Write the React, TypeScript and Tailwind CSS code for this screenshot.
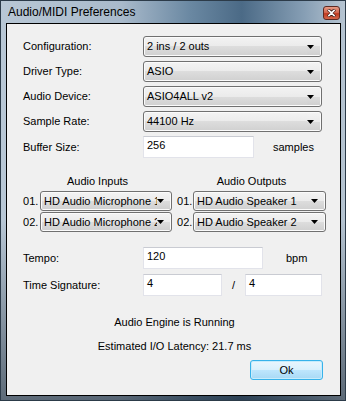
import React from 'react';

const font = { fontFamily: "'Liberation Sans', Arial, sans-serif" };

function Combo({ value, className = '' }: { value: string; className?: string }) {
  return (
    <div
      className={`relative flex items-center overflow-hidden rounded-[3px] border border-[#707070] bg-[linear-gradient(#f3f3f3_0%,#ebebeb_50%,#dddddd_50%,#d0d0d0_100%)] shadow-[inset_0_0_0_1px_#fbfbfb] ${className}`}
    >
      <span className="whitespace-nowrap pl-[3px] pr-[14px] text-[11px] leading-none text-black">{value}</span>
      <div className="absolute right-[1px] top-[1px] bottom-[1px] flex w-[13px] items-center justify-start bg-[linear-gradient(#f3f3f3_0%,#ebebeb_50%,#dddddd_50%,#d0d0d0_100%)]">
        <svg width="7" height="4" viewBox="0 0 7 4">
          <path d="M0 0h7L3.5 4z" fill="#000" />
        </svg>
      </div>
    </div>
  );
}

function Field({ value, className = '' }: { value: string; className?: string }) {
  return (
    <div
      className={`h-[22px] border border-[#e2e3ea] border-t-[#c9cbd2] bg-white pl-[3px] pt-[3px] text-[11px] leading-none text-black ${className}`}
    >
      {value}
    </div>
  );
}

function Label({ children }: { children: React.ReactNode }) {
  return <span className="w-[120px] shrink-0 text-[11px] leading-none text-black">{children}</span>;
}

export default function App() {
  return (
    <div
      className="relative h-[401px] w-[346px] border border-[#2c3b49] bg-[linear-gradient(90deg,#b8c7d5_0%,#a9bacb_35%,#6a88a2_55%,#4b6a86_70%,#869eb4_88%,#b7c5d2_100%)]"
      style={font}
    >
      <div className="pointer-events-none absolute inset-0 bg-[linear-gradient(180deg,transparent_0%,transparent_55%,rgba(20,32,45,0.55)_100%)]" />
      {/* Title bar */}
      <div className="relative flex h-[22px] items-center pl-[7px] pr-[5px]">
        <span className="text-[12px] text-black">Audio/MIDI Preferences</span>
        <div className="ml-auto mt-[2px] flex h-[14px] w-[17px] items-center justify-center rounded-[3px] border border-[#5e2a22] bg-[linear-gradient(#e79c86_0%,#d1614a_50%,#c03a20_55%,#d4664a_100%)]">
          <svg width="9" height="8" viewBox="0 0 9 8">
            <path d="M1 0.5l3.5 3 3.5-3M1 7.5l3.5-3 3.5 3" stroke="#3a1a14" strokeWidth="3" fill="none" />
            <path d="M1.3 0.8l3.2 3 3.2-3M1.3 7.2l3.2-3 3.2 3" stroke="#fff" strokeWidth="1.6" fill="none" />
          </svg>
        </div>
      </div>

      {/* Client area */}
      <div className="relative ml-[5px] h-[373px] w-[335px] border border-black bg-[#f0f0f0]">
        <div className="flex flex-col pl-[16px] pt-[12px]">
          {[
            ['Configuration:', '2 ins / 2 outs'],
            ['Driver Type:', 'ASIO'],
            ['Audio Device:', 'ASIO4ALL v2'],
            ['Sample Rate:', '44100 Hz'],
          ].map(([label, value], i) => (
            <div key={label} className={`flex items-center ${i > 0 ? 'mt-[4px]' : ''}`}>
              <Label>{label}</Label>
              <Combo value={value} className="h-[21px] w-[179px]" />
            </div>
          ))}

          <div className="mt-[4px] flex items-center">
            <Label>Buffer Size:</Label>
            <Field value="256" className="w-[111px]" />
            <span className="ml-[19px] text-[11px] leading-none text-black">samples</span>
          </div>

          {/* Audio I/O */}
          <div className="mt-[18px] flex">
            <div className="flex w-[154px] flex-col">
              <span className="mb-[4px] text-center text-[11px] leading-none text-black pr-[5px]">Audio Inputs</span>
              {['HD Audio Microphone 1', 'HD Audio Microphone 2'].map((v, i) => (
                <div key={v} className={`flex items-center ${i > 0 ? 'mt-[1px]' : ''}`}>
                  <span className="w-[17px] text-[11px] leading-none text-black">0{i + 1}.</span>
                  <Combo value={v} className="h-[20px] w-[132px]" />
                </div>
              ))}
            </div>
            <div className="flex w-[154px] flex-col">
              <span className="mb-[4px] text-center text-[11px] leading-none text-black pr-[5px]">Audio Outputs</span>
              {['HD Audio Speaker 1', 'HD Audio Speaker 2'].map((v, i) => (
                <div key={v} className={`flex items-center ${i > 0 ? 'mt-[1px]' : ''}`}>
                  <span className="w-[16px] text-[11px] leading-none text-black">0{i + 1}.</span>
                  <Combo value={v} className="h-[20px] w-[133px]" />
                </div>
              ))}
            </div>
          </div>

          <div className="mt-[15px] flex items-center">
            <Label>Tempo:</Label>
            <Field value="120" className="w-[120px]" />
            <span className="ml-[23px] text-[11px] leading-none text-black">bpm</span>
          </div>

          <div className="mt-[5px] flex items-center">
            <Label>Time Signature:</Label>
            <Field value="4" className="w-[79px]" />
            <span className="ml-[10px] w-[13px] text-[11px] leading-none text-black">/</span>
            <Field value="4" className="w-[77px]" />
          </div>

          <div className="mt-[21px] pr-[14px] text-center text-[11px] leading-none text-black">Audio Engine is Running</div>
          <div className="mt-[13px] pr-[14px] text-center text-[11px] leading-none text-black">Estimated I/O Latency: 21.7 ms</div>

          <div className="mt-[8px] flex justify-end pr-[17px]">
            <div className="flex h-[20px] w-[73px] items-center justify-center rounded-[3px] border border-[#37b2ea] bg-[linear-gradient(#eaf6fd_0%,#d9f0fc_50%,#bee6fd_50%,#a7d9f5_100%)] shadow-[inset_0_0_0_1px_#c6ecfc] text-[11px] leading-none text-black">
              Ok
            </div>
          </div>
        </div>
      </div>
    </div>
  );
}
